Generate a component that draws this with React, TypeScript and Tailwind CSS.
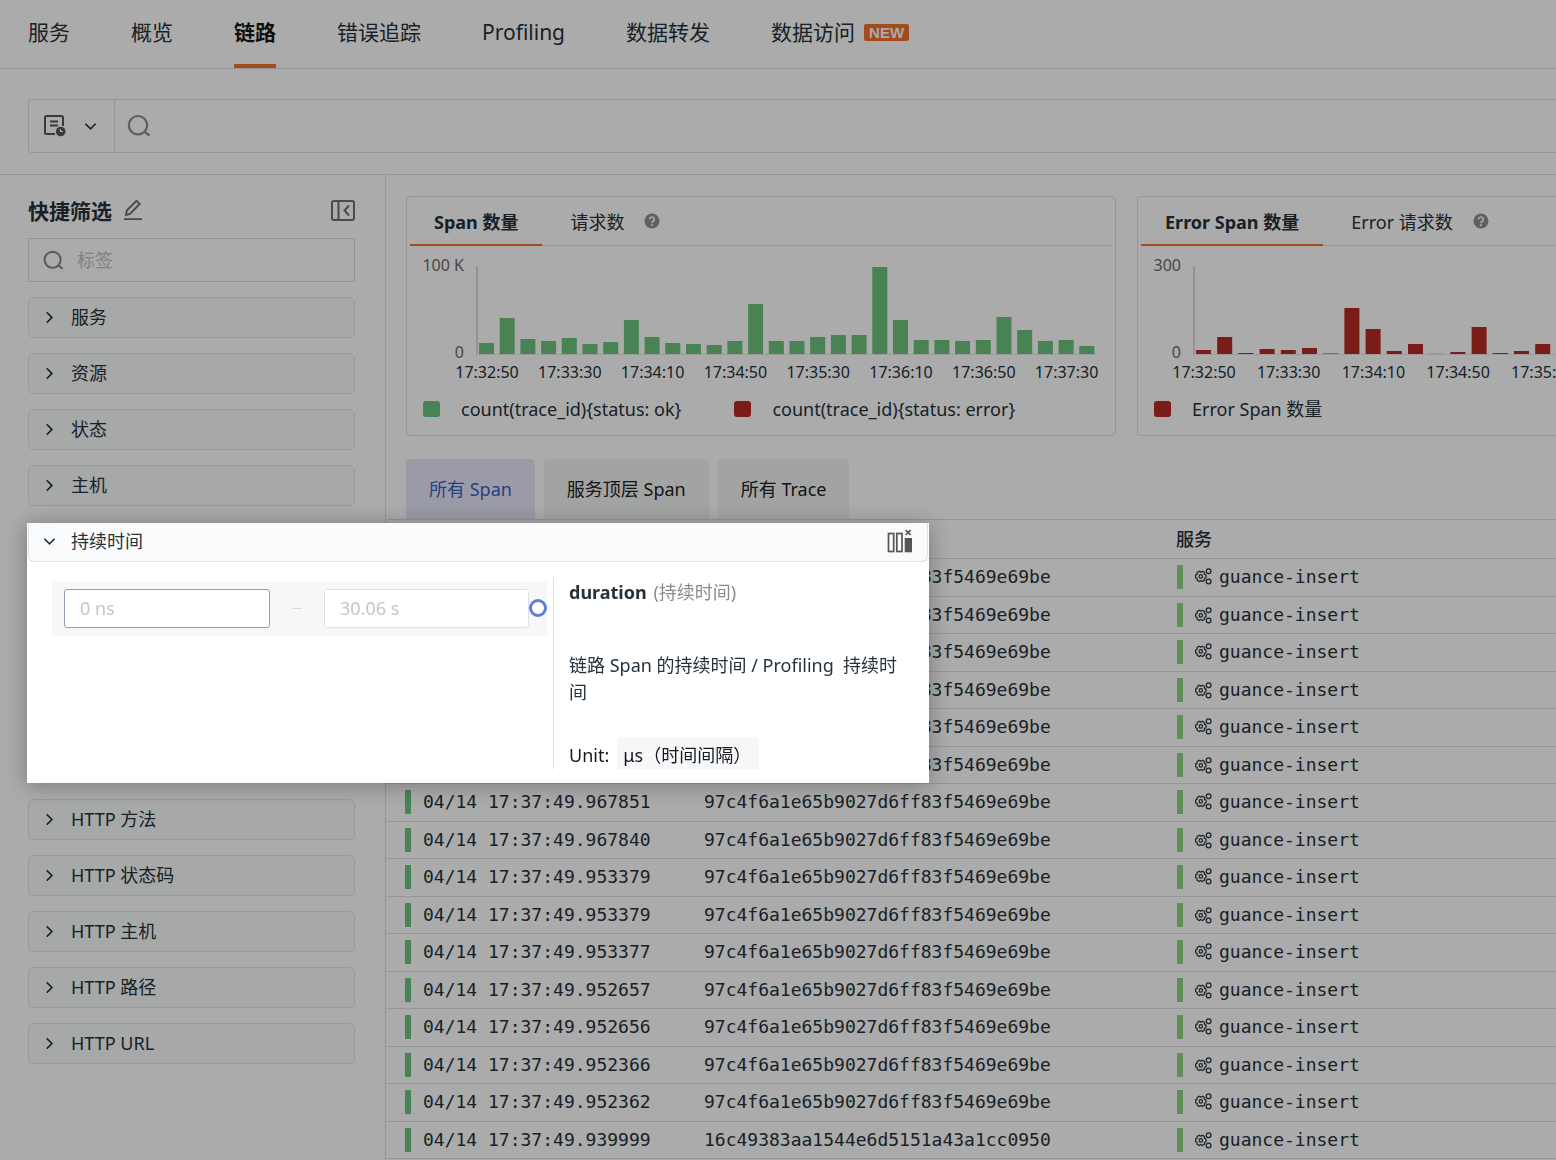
import React, { useState } from 'react';

interface Tab {
  label: string;
  isNew?: boolean;
}

interface ChartProps {
  max: string;
  bars: number[];
  axisX: number;
  step: number;
  labelX: number;
  labelStep: number;
  labels: string[];
  color: string;
}

const navTabs: Tab[] = [
  { label: '服务' },
  { label: '概览' },
  { label: '链路' },
  { label: '错误追踪' },
  { label: 'Profiling' },
  { label: '数据转发' },
  { label: '数据访问', isNew: true },
];

const filtersBefore = ['服务', '资源', '状态', '主机'];
const filtersAfter = ['HTTP 方法', 'HTTP 状态码', 'HTTP 主机', 'HTTP 路径', 'HTTP URL'];

const times = ['17:32:50', '17:33:30', '17:34:10', '17:34:50', '17:35:30', '17:36:10', '17:36:50', '17:37:30'];

const okBars = [
  11, 36, 15, 13, 16, 10, 12, 34, 17, 11, 10, 9, 13, 50, 13, 13, 17, 19, 19, 87, 34, 14, 14, 13, 14, 37, 24, 13, 14, 8,
];
const errorBars = [4, 17, 1, 5, 4, 6, 0.5, 46, 25, 3, 10, 0.2, 2, 27, 1, 3, 10, 4, 6, 3];

const traceId = '97c4f6a1e65b9027d6ff83f5469e69be';

const rows = [
  { time: '04/14 17:37:49.968112', trace: traceId },
  { time: '04/14 17:37:49.968104', trace: traceId },
  { time: '04/14 17:37:49.968097', trace: traceId },
  { time: '04/14 17:37:49.967934', trace: traceId },
  { time: '04/14 17:37:49.967902', trace: traceId },
  { time: '04/14 17:37:49.967866', trace: traceId },
  { time: '04/14 17:37:49.967851', trace: traceId },
  { time: '04/14 17:37:49.967840', trace: traceId },
  { time: '04/14 17:37:49.953379', trace: traceId },
  { time: '04/14 17:37:49.953379', trace: traceId },
  { time: '04/14 17:37:49.953377', trace: traceId },
  { time: '04/14 17:37:49.952657', trace: traceId },
  { time: '04/14 17:37:49.952656', trace: traceId },
  { time: '04/14 17:37:49.952366', trace: traceId },
  { time: '04/14 17:37:49.952362', trace: traceId },
  { time: '04/14 17:37:49.939999', trace: '16c49383aa1544e6d5151a43a1cc0950' },
];

function SearchIcon({ className }: { className: string }) {
  return (
    <svg viewBox="0 0 24 24" fill="none" stroke="currentColor" strokeWidth="2.2" className={className}>
      <circle cx="11" cy="11.2" r="9.2" />
      <path d="M17.500 17.800l5 3.700" />
    </svg>
  );
}

function ChevronIcon({ className }: { className: string }) {
  return (
    <svg viewBox="0 0 12 12" fill="none" stroke="currentColor" strokeWidth="1.5" className={className}>
      <path d="M3.500 1.300l4.700 4.700-4.700 4.700" />
    </svg>
  );
}

function HelpIcon() {
  return (
    <svg viewBox="0 0 16 16" className="h-4 w-4 text-[#8f8f8f]">
      <circle cx="8" cy="8" r="7.5" fill="currentColor" />
      <path d="M5.700 6.300a2.300 2.300 0 1 1 3.500 2C8.400 8.800 8 9.100 8 10" fill="none" stroke="#fff" strokeWidth="1.6" />
      <circle cx="8" cy="12" r="1" fill="#fff" />
    </svg>
  );
}

function ServiceIcon() {
  return (
    <svg
      viewBox="0 0 17 17"
      fill="none"
      stroke="currentColor"
      strokeWidth="1.2"
      strokeLinejoin="round"
      className="h-[17px] w-[17px] shrink-0"
    >
      <path d="M11 7.100v2.600l-1.600.8.100 1.800-2.200 1.300-1.500-1-1.500 1-2.200-1.300.1-1.800-1.600-.8V7.100l1.600-.8-.1-1.800 2.200-1.300 1.500 1 1.500-1 2.200 1.300-.1 1.800z" />
      <circle cx="5.800" cy="8.400" r="1.700" />
      <circle cx="13.600" cy="3.300" r="2.400" />
      <circle cx="13.600" cy="13.500" r="2.400" />
    </svg>
  );
}

function BarChart({ max, bars, axisX, step, labelX, labelStep, labels, color }: ChartProps) {
  return (
    <svg width="708" height="140" className="block shrink-0 text-base">
      <text x={axisX - 12} y="25" textAnchor="end" fill="#6b6b6b">{max}</text>
      <text x={axisX - 12} y="112" textAnchor="end" fill="#6b6b6b">0</text>
      <path d={`M${axisX + 1} 20V108.500`} stroke="#dcdce0" strokeWidth="2" />
      <path d={`M${axisX} 108.500H${axisX + 620}`} stroke="#e8e8ec" />
      {bars.map((height, i) => (
        <rect
          key={i}
          x={axisX + 3 + i * step}
          y={108 - Math.max(height, 1)}
          width="15"
          height={Math.max(height, 1)}
          fill={color}
          opacity={height < 1 ? height : 1}
        />
      ))}
      {labels.map((label, i) => (
        <text key={label} x={labelX + i * labelStep} y="132" textAnchor="middle" fill="#26323b">{label}</text>
      ))}
    </svg>
  );
}

function ChartCard({ tabs, legend, children }: { tabs: string[]; legend: { label: string; ok?: boolean }[]; children: React.ReactNode }) {
  return (
    <section className="h-60 w-[710px] shrink-0 rounded border border-[#e0e0e4]">
      <div className="mx-[3px] flex h-[49px] items-center border-b border-[#e2e2e5]">
        <button className="h-[49px] border-b-2 border-[#f3702c] px-6 pt-1 font-bold">{tabs[0]}</button>
        <button className="ml-7 pt-0.5">{tabs[1]}</button>
        <span className="ml-5">
          <HelpIcon />
        </span>
      </div>
      {children}
      <div className="flex h-[46px] items-center gap-[53px] px-4">
        {legend.map((item) => (
          <div key={item.label} className="flex items-center gap-[21px]">
            <span className={`h-4 w-[17px] rounded-[3px] ${item.ok ? 'bg-[#6ec27c]' : 'bg-[#b92a24]'}`} />
            {item.label}
          </div>
        ))}
      </div>
    </section>
  );
}

function FilterItem({ label }: { label: string }) {
  return (
    <li>
      <button className="flex h-[41px] w-full items-center gap-[15px] rounded-md border border-[#e2e4e6] bg-[#fafbfb] pb-px pl-[14px]">
        <ChevronIcon className="h-[13px] w-[13px]" />
        {label}
      </button>
    </li>
  );
}

function DurationPanel() {
  const [min, setMin] = useState('');
  const [max, setMax] = useState('');

  return (
    <div className="absolute top-[2px] -left-px z-20 h-[260px] w-[902px] bg-white shadow-[0_2px_20px_rgba(0,0,0,0.3)]">
      <div className="mx-px flex h-[39px] items-center rounded-b-md border-x border-b border-[#e0e1e5] bg-[#fafbfd] pr-[14px] pb-0.5 pl-[14px]">
        <button className="flex items-center gap-[15px]">
          <ChevronIcon className="h-[13px] w-[13px] rotate-90" />
          持续时间
        </button>
        <button aria-label="隐藏列" className="ml-auto text-[#555]">
          <svg viewBox="0 0 26 25" fill="none" stroke="currentColor" strokeWidth="1.7" className="h-[25px] w-[26px]">
            <rect x="1.5" y="4.5" width="5.200" height="18" />
            <rect x="9.8" y="4.5" width="5.200" height="18" />
            <rect x="17.7" y="9" width="7.300" height="14.300" fill="currentColor" stroke="none" />
            <path d="M18.700 1.200l5 4.800M23.700 1.200l-5 4.800" />
          </svg>
        </button>
      </div>
      <div className="flex pt-[15px]">
        <div className="ml-[25px] w-[495px] pt-[5px]">
          <div className="flex h-[54px] items-center bg-[#f6f7f9] pb-0.5 pl-3">
            <input
              aria-label="最小值"
              placeholder="0 ns"
              value={min}
              onChange={(e) => setMin(e.target.value)}
              className="h-[39px] w-[206px] rounded-[3px] border border-[#929db8] bg-white px-[15px] outline-none placeholder:text-[#c6c6c6]"
            />
            <span className="mx-[22px] h-px w-[10px] bg-[#dcdcdf]" />
            <input
              aria-label="最大值"
              placeholder="30.06 s"
              value={max}
              onChange={(e) => setMax(e.target.value)}
              className="h-[39px] w-[205px] rounded-[3px] border border-[#e0e1e4] bg-white px-[15px] outline-none placeholder:text-[#c6c6c6]"
            />
            <button aria-label="拖动范围" className="h-[18px] w-[18px] rounded-full border-[3px] border-[#6080d4] bg-white" />
          </div>
        </div>
        <div className="ml-[6px] h-48 flex-1 border-l border-[#dedee2] pr-5 pl-[15px]">
          <p className="h-[75px] leading-[30px]">
            <b>duration</b> <span className="ml-0.5 text-[#8b8b8b]">(持续时间)</span>
          </p>
          <p className="h-[85px] leading-[27px]">链路 Span 的持续时间 / Profiling&nbsp; 持续时间</p>
          <p className="flex h-8 items-center gap-2 text-[#171a1c]">
            <span className="pt-1">Unit:</span>
            <span className="flex h-8 w-[142px] items-center rounded-t bg-[#f6f7f9] pt-1 pl-[6px]">μs（时间间隔）</span>
          </p>
        </div>
      </div>
    </div>
  );
}

export default function App() {
  const [activeTab, setActiveTab] = useState('链路');

  return (
    <div
      lang="zh-CN"
      className="flex h-screen flex-col overflow-hidden bg-white font-['Noto_Sans','Noto_Sans_CJK_SC',sans-serif] text-lg leading-6 text-[#26323b]"
    >
      <nav className="flex h-[69px] shrink-0 gap-[61px] border-b border-[#e0e0e6] px-7 text-[21px]">
        {navTabs.map((tab) => (
          <button
            key={tab.label}
            onClick={() => setActiveTab(tab.label)}
            className={`flex h-[68px] items-center gap-[9px] whitespace-nowrap border-b-4 ${
              tab.label === activeTab ? 'border-[#f3702c] font-bold text-[#171717]' : 'border-transparent'
            }`}
          >
            {tab.label}
            {tab.isNew && (
              <span className="rounded-[2px] bg-[#f3702c] px-[5px] font-['Liberation_Sans',sans-serif] text-[15px] leading-[17px] font-bold text-white">NEW</span>
            )}
          </button>
        ))}
      </nav>

      <div className="h-[106px] shrink-0 border-b border-[#e0e0e4] pt-[30px] pl-7">
        <div className="flex h-[54px] rounded-l border border-r-0 border-[#e0e0e4]">
          <button aria-label="历史查询" className="flex w-[86px] items-center border-r border-[#e0e0e4] pl-[15px]">
            <svg viewBox="0 0 22 22" fill="none" stroke="#555" strokeWidth="2" className="h-[22px] w-[22px]">
              <path d="M11 19H2.500A1.500 1.500 0 0 1 1 17.500v-15A1.500 1.500 0 0 1 2.500 1h15A1.500 1.500 0 0 1 19 2.500V11M6 6.500h8M6 10.500h8" />
              <circle cx="16.700" cy="16.500" r="4.800" fill="#555" stroke="none" />
              <path d="M16.500 14v2.500H19" stroke="#fff" strokeWidth="1.2" />
            </svg>
            <ChevronIcon className="ml-[18px] h-[13px] w-[13px] rotate-90" />
          </button>
          <label className="flex flex-1 items-center pl-3">
            <SearchIcon className="h-6 w-6 text-[#8c8c8c]" />
            <input aria-label="搜索" className="ml-3 flex-1 outline-none" />
          </label>
        </div>
      </div>

      <div className="flex min-h-0 flex-1">
        <aside className="w-[386px] shrink-0 border-r border-[#e0e0e4] pt-6 pr-[30px] pl-7">
          <div className="flex h-6 items-center">
            <h2 className="text-[21px] font-bold">快捷筛选</h2>
            <button aria-label="编辑" className="ml-[11px] pb-0.5 text-[#6b6b6b]">
              <svg viewBox="0 0 20 22" fill="none" stroke="currentColor" strokeWidth="1.8" className="h-[22px] w-5">
                <path d="M3 16l.8-4.500L13.500 1.800l3.200 3.200L7 14.900zM1 20.200h18" />
              </svg>
            </button>
            <button aria-label="收起" className="ml-auto pb-0.5 text-[#6f6f6f]">
              <svg viewBox="0 0 24 21" fill="none" stroke="currentColor" strokeWidth="2" className="h-[21px] w-6">
                <rect x="1" y="1" width="22" height="19" rx="2" />
                <path d="M7.500 1v19M18 5.500l-4.500 5 4.500 5" />
              </svg>
            </button>
          </div>
          <label className="mt-[15px] mb-[15px] flex h-11 items-center border border-[#dddde1] pl-[14px]">
            <SearchIcon className="h-[21px] w-[21px] shrink-0 text-[#858585]" />
            <input aria-label="标签" placeholder="标签" className="ml-[13px] w-full outline-none placeholder:text-[#c2c2c2]" />
          </label>
          <ul className="space-y-[15px]">
            {filtersBefore.map((label) => (
              <FilterItem key={label} label={label} />
            ))}
            <li className="relative h-[263px]">
              <DurationPanel />
            </li>
            {filtersAfter.map((label) => (
              <FilterItem key={label} label={label} />
            ))}
          </ul>
        </aside>

        <main className="min-w-0 flex-1 overflow-hidden pt-[21px]">
          <div className="flex gap-[21px] pl-5">
            <ChartCard
              tabs={['Span 数量', '请求数']}
              legend={[{ label: 'count(trace_id){status: ok}', ok: true }, { label: 'count(trace_id){status: error}' }]}
            >
              <BarChart max="100 K" bars={okBars} axisX={69} step={20.7} labelX={80} labelStep={82.8} labels={times} color="#6ec27c" />
            </ChartCard>
            <ChartCard tabs={['Error Span 数量', 'Error 请求数']} legend={[{ label: 'Error Span 数量' }]}>
              <BarChart
                max="300"
                bars={errorBars}
                axisX={55}
                step={21.2}
                labelX={66}
                labelStep={84.7}
                labels={times.slice(0, 5)}
                color="#b92a24"
              />
            </ChartCard>
          </div>

          <div className="mt-[23px] flex gap-[9px] pl-5">
            <button className="h-[60px] rounded-t bg-[#e6e8f8] px-[23px] text-[#3c5ec6]">所有 Span</button>
            <button className="h-[60px] rounded-t bg-[#f2f4f4] px-[23px] text-[#222]">服务顶层 Span</button>
            <button className="h-[60px] rounded-t bg-[#f2f4f4] px-[23px] text-[#222]">所有 Trace</button>
          </div>

          <table className="w-full table-fixed border-collapse text-left">
            <thead>
              <tr className="h-[39px] border-y border-[#e0e0e6]">
                <th className="w-[318px] pl-9 font-medium">时间</th>
                <th className="w-[472px] font-medium">trace_id</th>
                <th className="font-medium">服务</th>
              </tr>
            </thead>
            <tbody className="font-['DejaVu_Sans_Mono',monospace] whitespace-nowrap">
              {rows.map((row, i) => (
                <tr key={i} className="border-b border-[#e0e0e6] odd:h-[38px] even:h-[37px] odd:[&>td]:pb-0.5">
                  <td className="p-0 pl-[19px]">
                    <div className="flex items-center gap-3">
                      <span className="h-6 w-[6px] bg-[#6ec27c]" />
                      {row.time}
                    </div>
                  </td>
                  <td className="p-0">{row.trace}</td>
                  <td className="p-0">
                    <div className="flex items-center">
                      <span className="mr-3 ml-px h-6 w-[6px] bg-[#8ed582]" />
                      <ServiceIcon />
                      <span className="ml-[7px]">guance-insert</span>
                    </div>
                  </td>
                </tr>
              ))}
            </tbody>
          </table>
        </main>
      </div>

      <div className="pointer-events-none fixed inset-0 z-10 bg-black/33" />
    </div>
  );
}
